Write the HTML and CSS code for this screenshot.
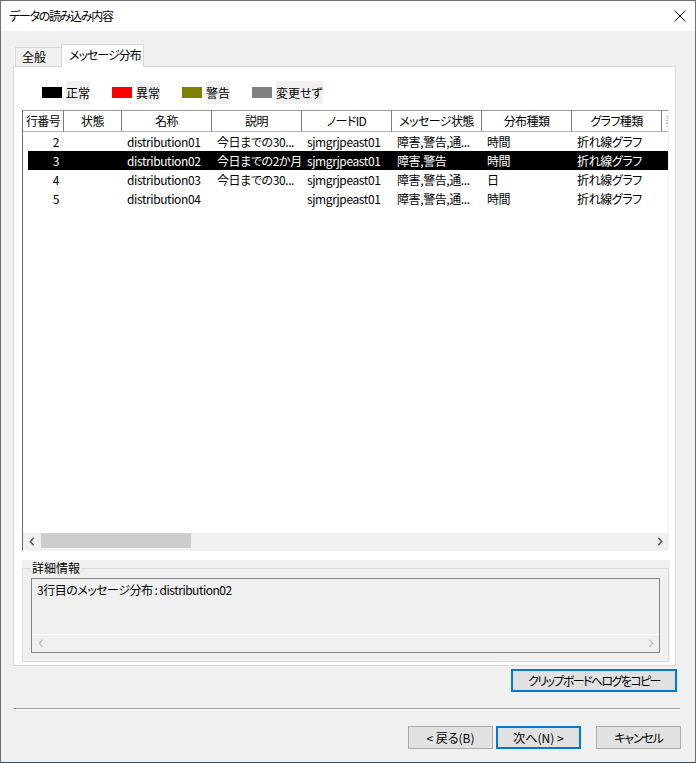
FILE: index.html
```html
<!DOCTYPE html>
<html lang="ja">
<head>
<meta charset="utf-8">
<title>データの読み込み内容</title>
<link rel="stylesheet" href="styles.css">
</head>
<body>
<div class="window">
  <div class="titlebar">
    <span class="title">データの読み込み内容</span>
    <svg class="close" width="12" height="12" viewBox="0 0 12 12"><path d="M0.5 0.5 L11.5 11.5 M11.5 0.5 L0.5 11.5" stroke="#000" stroke-width="1" fill="none"/></svg>
  </div>
  <div class="client">
    <div class="tabs">
      <div class="tab">全般</div>
      <div class="tab active">メッセージ分布</div>
    </div>
    <div class="panel">
      <div class="legend">
        <div class="legend-item"><span class="swatch sw-normal"></span><span class="legend-label">正常</span></div>
        <div class="legend-item"><span class="swatch sw-error"></span><span class="legend-label">異常</span></div>
        <div class="legend-item"><span class="swatch sw-warn"></span><span class="legend-label">警告</span></div>
        <div class="legend-item"><span class="swatch sw-same"></span><span class="legend-label">変更せず</span></div>
      </div>
      <div class="list">
        <div class="list-view">
          <div class="lv-row lv-header">
            <div class="lv-cell">行番号</div>
            <div class="lv-cell">状態</div>
            <div class="lv-cell">名称</div>
            <div class="lv-cell">説明</div>
            <div class="lv-cell">ノードID</div>
            <div class="lv-cell">メッセージ状態</div>
            <div class="lv-cell">分布種類</div>
            <div class="lv-cell">グラフ種類</div>
            <div class="lv-cell lv-extra">表示期間</div>
          </div>
          <div class="lv-row">
            <div class="lv-cell num">2</div>
            <div class="lv-cell"></div>
            <div class="lv-cell">distribution01</div>
            <div class="lv-cell">今日までの30...</div>
            <div class="lv-cell">sjmgrjpeast01</div>
            <div class="lv-cell">障害,警告,通...</div>
            <div class="lv-cell">時間</div>
            <div class="lv-cell">折れ線グラフ</div>
            <div class="lv-cell faint">一日</div>
          </div>
          <div class="lv-row selected">
            <div class="lv-cell num">3</div>
            <div class="lv-cell"></div>
            <div class="lv-cell">distribution02</div>
            <div class="lv-cell">今日までの2か月</div>
            <div class="lv-cell">sjmgrjpeast01</div>
            <div class="lv-cell">障害,警告</div>
            <div class="lv-cell">時間</div>
            <div class="lv-cell">折れ線グラフ</div>
            <div class="lv-cell"></div>
          </div>
          <div class="lv-row">
            <div class="lv-cell num">4</div>
            <div class="lv-cell"></div>
            <div class="lv-cell">distribution03</div>
            <div class="lv-cell">今日までの30...</div>
            <div class="lv-cell">sjmgrjpeast01</div>
            <div class="lv-cell">障害,警告,通...</div>
            <div class="lv-cell">日</div>
            <div class="lv-cell">折れ線グラフ</div>
            <div class="lv-cell"></div>
          </div>
          <div class="lv-row">
            <div class="lv-cell num">5</div>
            <div class="lv-cell"></div>
            <div class="lv-cell">distribution04</div>
            <div class="lv-cell"></div>
            <div class="lv-cell">sjmgrjpeast01</div>
            <div class="lv-cell">障害,警告,通...</div>
            <div class="lv-cell">時間</div>
            <div class="lv-cell">折れ線グラフ</div>
            <div class="lv-cell faint">一日</div>
          </div>
        </div>
        <div class="hscroll">
          <div class="sb-arrow"><svg width="6" height="9" viewBox="0 0 6 9"><path d="M4.6 0.8 L1.4 4.5 L4.6 8.2" stroke="#606060" stroke-width="1.7" fill="none"/></svg></div>
          <div class="sb-track"><div class="sb-thumb"></div></div>
          <div class="sb-arrow"><svg width="6" height="9" viewBox="0 0 6 9"><path d="M1.4 0.8 L4.6 4.5 L1.4 8.2" stroke="#606060" stroke-width="1.7" fill="none"/></svg></div>
        </div>
      </div>
      <div class="details">
        <fieldset class="details-frame">
          <legend>詳細情報</legend>
          <div class="textbox">
            <div class="textbox-text">3行目のメッセージ分布 : distribution02</div>
            <div class="hscroll disabled">
              <div class="sb-arrow"><svg width="6" height="9" viewBox="0 0 6 9"><path d="M4.6 0.8 L1.4 4.5 L4.6 8.2" stroke="#c2c2c2" stroke-width="1.5" fill="none"/></svg></div>
              <div class="sb-track"></div>
              <div class="sb-arrow"><svg width="6" height="9" viewBox="0 0 6 9"><path d="M1.4 0.8 L4.6 4.5 L1.4 8.2" stroke="#c2c2c2" stroke-width="1.5" fill="none"/></svg></div>
            </div>
          </div>
        </fieldset>
      </div>
    </div>
    <div class="copy-row">
      <button class="btn focus btn-copy">クリップボードへログをコピー</button>
    </div>
    <div class="separator"></div>
    <div class="nav-row">
      <button class="btn">&lt; 戻る(B)</button>
      <button class="btn focus btn-next">次へ(N) &gt;</button>
      <button class="btn btn-cancel">キャンセル</button>
    </div>
  </div>
</div>
</body>
</html>
```

FILE: styles.css
```css
html, body {
  margin: 0;
  padding: 0;
  background: #ffffff;
}

body {
  font-family: "Noto Sans CJK JP", "Noto Sans", sans-serif;
  font-size: 12px;
  font-feature-settings: "palt";
  color: #000;
}

.window {
  width: 696px;
  height: 763px;
  box-sizing: border-box;
  border: 1px solid #707070;
  border-bottom-color: #24506a;
  background: #f0f0f0;
  display: flex;
  flex-direction: column;
}

.titlebar {
  height: 30px;
  flex: none;
  background: #ffffff;
  display: flex;
  align-items: center;
  justify-content: space-between;
  padding: 0 9px 0 8px;
}

.title {
  line-height: 16px;
  letter-spacing: -1.3px;
}

.close {
  display: block;
}

.client {
  flex: 1;
  display: flex;
  flex-direction: column;
  padding: 13px 0 0 12px;
}

/* tabs */
.tabs {
  display: flex;
  align-items: flex-end;
  height: 22px;
  padding-left: 2px;
  position: relative;
  z-index: 1;
}

.tab {
  box-sizing: border-box;
  height: 19px;
  width: 46px;
  padding-left: 6px;
  line-height: 18px;
  background: #f0f0f0;
  border: 1px solid #d9d9d9;
  border-right: none;
  border-bottom: none;
  white-space: nowrap;
}

.tab.active {
  height: 23px;
  width: 83px;
  margin-bottom: -1px;
  padding-left: 7px;
  line-height: 20px;
  letter-spacing: -1px;
  background: #ffffff;
  border-right: 1px solid #d9d9d9;
  overflow: hidden;
}

/* panel */
.panel {
  box-sizing: border-box;
  width: 663px;
  height: 600px;
  border: 1px solid #d9d9d9;
  background: #ffffff;
  display: flex;
  flex-direction: column;
}

.legend {
  display: grid;
  grid-template-columns: 70px 70px 70px 80px;
  margin-top: 14px;
  padding-left: 28px;
  height: 23px;
}

.legend-item {
  display: flex;
  align-items: center;
  gap: 4px;
}

.swatch {
  width: 20px;
  height: 11px;
  flex: none;
}

.sw-normal { background: #000000; }
.sw-error { background: #ff0000; }
.sw-warn { background: #808000; }
.sw-same { background: #808080; }

.legend-label {
  background: #f0f0f0;
  line-height: 23px;
  height: 23px;
  white-space: nowrap;
}

/* list view */
.list {
  box-sizing: border-box;
  width: 647px;
  height: 441px;
  margin: 6px 0 0 8px;
  border-left: 1px solid #6a6a6a;
  border-top: 1px solid #9a9a9a;
  border-right: 1px solid #f0f0f0;
  border-bottom: 1px solid #f0f0f0;
  display: flex;
  flex-direction: column;
  background: #ffffff;
}

.list-view {
  flex: 1;
  overflow: hidden;
}

.lv-row {
  display: grid;
  grid-template-columns: 41px 58px 90px 90px 90px 90px 90px 90px 90px;
  width: max-content;
  height: 19px;
}

.lv-cell {
  box-sizing: border-box;
  padding: 0 5px;
  line-height: 19px;
  letter-spacing: -0.4px;
  white-space: nowrap;
  overflow: hidden;
}

.lv-cell.num {
  text-align: right;
}

.lv-cell.faint {
  color: #d8d8c0;
}

.lv-header {
  height: 21px;
  border-bottom: 1px solid #b4b4b4;
  box-sizing: border-box;
}

.lv-header .lv-cell {
  border-right: 1px solid #7a7a7a;
  text-align: center;
  padding: 0;
  line-height: 20px;
  letter-spacing: -0.6px;
}

.lv-header .lv-cell.lv-extra {
  text-align: left;
  padding-left: 3px;
  color: #b0b0b0;
}

.lv-row.selected .lv-cell {
  background: #000000;
  color: #ffffff;
}

.lv-row.selected .lv-cell:first-child {
  background: linear-gradient(90deg, #ffffff 5px, #000000 5px);
}

/* scrollbars */
.hscroll {
  height: 17px;
  flex: none;
  display: flex;
  background: #f0f0f0;
}

.sb-arrow {
  width: 17px;
  height: 17px;
  flex: none;
  display: flex;
  align-items: center;
  justify-content: center;
}

.sb-arrow svg {
  display: block;
}

.sb-track {
  flex: 1;
  display: flex;
}

.sb-thumb {
  width: 150px;
  height: 15px;
  margin-left: 1px;
  background: #cdcdcd;
}

/* details */
.details {
  width: 648px;
  height: 102px;
  margin: 9px 0 0 8px;
  background: #f0f0f0;
}

.details-frame {
  margin: 0 1px 0 0;
  padding: 0 8px 8px 8px;
  border: 1px solid #dcdcdc;
  min-width: 0;
}

.details-frame legend {
  padding: 0 1px;
  line-height: 16px;
  height: 16px;
}

.textbox {
  box-sizing: border-box;
  height: 75px;
  margin-top: 2px;
  border: 1px solid #828282;
  background: #f0f0f0;
  display: flex;
  flex-direction: column;
}

.textbox-text {
  flex: 1;
  padding: 3px 5px 0 5px;
  line-height: 16px;
  letter-spacing: -0.5px;
  white-space: nowrap;
}

.hscroll.disabled {
  height: 18px;
  box-sizing: border-box;
  border-top: 1px solid #fbfbfb;
  align-items: center;
}

.hscroll.disabled .sb-arrow {
  height: 17px;
}

/* buttons */
.copy-row {
  display: flex;
  justify-content: flex-end;
  margin-top: 3px;
  padding-right: 18px;
}

.btn {
  box-sizing: border-box;
  height: 23px;
  width: 85px;
  margin: 0;
  padding: 0;
  font: inherit;
  font-feature-settings: "palt";
  color: #000;
  background: #e1e1e1;
  border: 1px solid #adadad;
  line-height: 21px;
  text-align: center;
  white-space: nowrap;
}

.btn.focus {
  border: 2px solid #0078d7;
  line-height: 19px;
}

.btn-copy {
  width: 166px;
  letter-spacing: -1.6px;
}

.separator {
  height: 1px;
  margin: 16px 15px 0 0;
  background: #a0a0a0;
  border-bottom: 1px solid #ffffff;
}

.nav-row {
  display: flex;
  justify-content: flex-end;
  margin-top: 16px;
  padding-right: 14px;
}

.btn-next {
  margin-left: 3px;
}

.btn-cancel {
  margin-left: 15px;
  letter-spacing: -1.2px;
}
```
